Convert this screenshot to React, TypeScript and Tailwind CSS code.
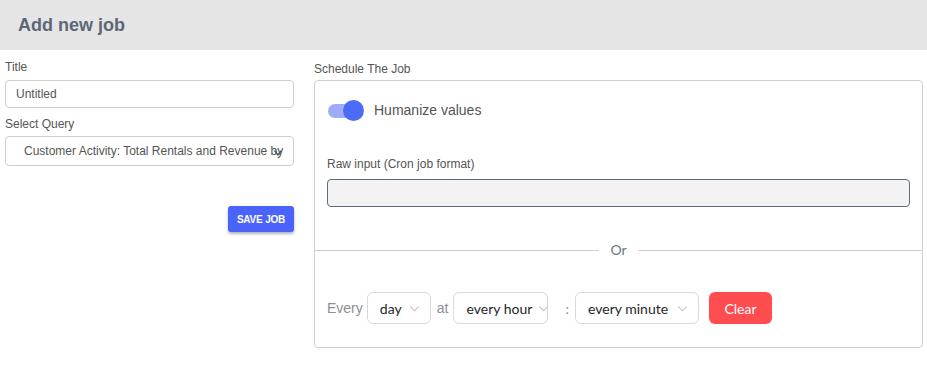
import React from 'react'

const Chevron = () => (
  <svg width="11" height="11" viewBox="0 0 12 12" fill="none" stroke="#bfbfbf" strokeWidth="1.1" className="ml-[6px] shrink-0">
    <path d="M1.5 4l4.5 4.5L10.5 4" />
  </svg>
)

const SmallSelect = ({ value, width }: { value: string; width: string }) => (
  <div className={`${width} h-[32px] flex items-center justify-between border border-[#d9d9d9] rounded-[6px] pl-[12px] pr-[10px] bg-white text-[14px] text-[#262626] whitespace-nowrap`}>
    <span>{value}</span>
    <Chevron />
  </div>
)

const App = () => {
  return (
    <div className="w-[927px] h-[388px] bg-white font-['Liberation_Sans',Arial,sans-serif]">
      <div className="h-[50px] bg-[#e5e5e5] flex items-center px-[18px]">
        <h1 className="text-[18px] font-bold text-[#5d6778]">Add new job</h1>
      </div>

      <div className="flex">
        {/* left column */}
        <div className="ml-[5px] w-[289px] flex flex-col pt-[10px]">
          <label className="text-[12px] leading-[14px] text-[#555] mb-[6px]">Title</label>
          <div className="h-[28px] border border-[#cfcfcf] rounded-[4px] flex items-center px-[10px] text-[12px] text-[#555]">
            Untitled
          </div>
          <label className="text-[12px] leading-[14px] text-[#555] mt-[9px] mb-[5px]">Select Query</label>
          <div className="relative h-[30px] border border-[#cfcfcf] rounded-[4px] flex items-center pl-[18px] text-[12px] text-[#555] overflow-hidden whitespace-nowrap">
            Customer Activity: Total Rentals and Revenue by
            <svg width="8" height="6" viewBox="0 0 8 6" className="absolute right-[11px] top-[13px]">
              <path d="M0.5 0.5L4 5L7.5 0.5" fill="none" stroke="#555" strokeWidth="1.4" />
            </svg>
          </div>
          <button className="self-end mt-[40px] w-[66px] h-[26px] rounded-[3px] bg-[#4a63fb] text-white text-[10px] font-bold tracking-[-0.2px] shadow-[0_2px_3px_rgba(0,0,0,0.3)]">
            SAVE JOB
          </button>
        </div>

        {/* right column */}
        <div className="ml-[20px] w-[609px] flex flex-col pt-[12px]">
          <label className="text-[12px] leading-[14px] text-[#555] mb-[4px]">Schedule The Job</label>
          <div className="h-[268px] border border-[#d0d0d0] rounded-[4px] flex flex-col">
            <div className="px-[12px] pt-[19px]">
              <div className="flex items-center h-[21px]">
                <div className="relative w-[36px] h-[21px] ml-[1px]">
                  <div className="absolute left-0 top-[4px] w-[34px] h-[14px] rounded-full bg-[#9eabf9]" />
                  <div className="absolute right-0 top-0 w-[21px] h-[21px] rounded-full bg-[#4b6cf7]" />
                </div>
                <span className="ml-[10px] text-[14px] text-[#555]">Humanize values</span>
              </div>
              <div className="mt-[36px] text-[12px] leading-[14px] text-[#555]">Raw input (Cron job format)</div>
              <div className="mt-[8px] h-[28px] bg-[#f3f3f3] border border-[#5f6c7b] rounded-[4px]" />
            </div>

            <div className="mt-[35px] flex items-center">
              <div className="flex-1 h-px bg-[#cfcfcf]" />
              <span className="px-[11px] text-[14px] leading-[16px] text-[#6b7888] font-['Lato',sans-serif]">Or</span>
              <div className="flex-1 h-px bg-[#cfcfcf]" />
            </div>

            <div className="mt-[34px] px-[12px] flex items-center font-['Lato',sans-serif]">
              <span className="text-[14px] text-[#8a8f98] mr-[4px] font-['Liberation_Sans',Arial,sans-serif]">Every</span>
              <SmallSelect value="day" width="w-[64px]" />
              <span className="text-[14px] text-[#8a8f98] ml-[6px] mr-[5px] font-['Liberation_Sans',Arial,sans-serif]">at</span>
              <SmallSelect value="every hour" width="w-[95px]" />
              <span className="text-[14px] text-[#8a8f98] ml-[17px] mr-[6px]">:</span>
              <SmallSelect value="every minute" width="w-[124px]" />
              <button className="ml-[10px] w-[63px] h-[32px] rounded-[6px] bg-[#ff4d4f] text-white text-[14px]">
                Clear
              </button>
            </div>
          </div>
        </div>
      </div>
    </div>
  )
}

export default App
